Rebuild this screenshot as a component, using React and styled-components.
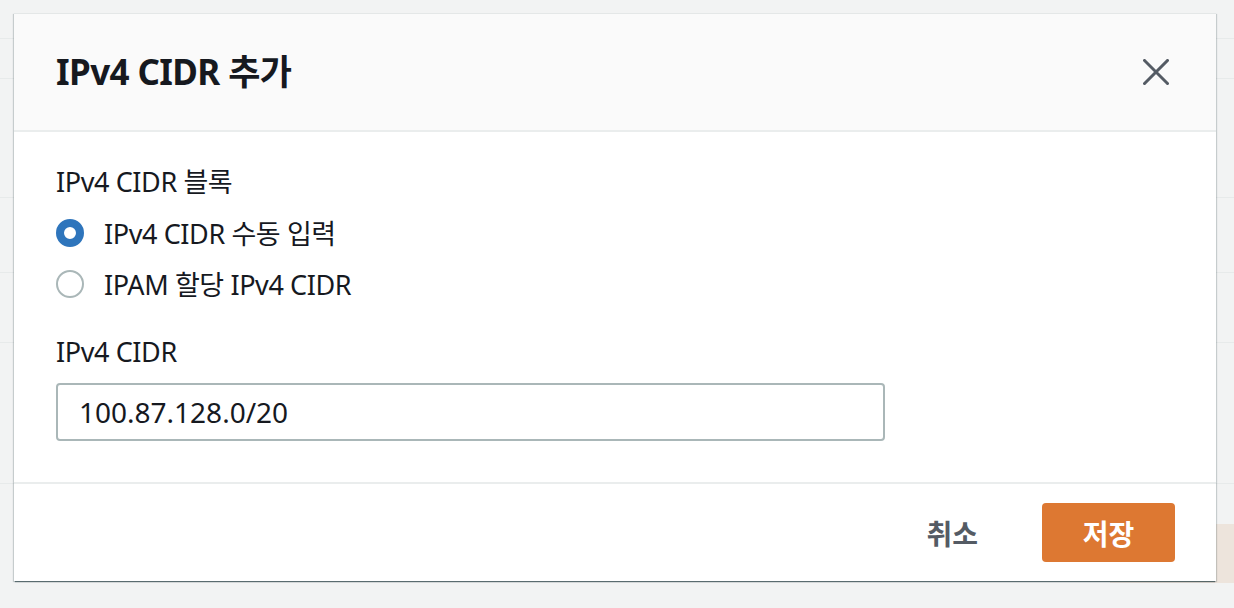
import React from "react";
import styled, { createGlobalStyle } from "styled-components";

const Global = createGlobalStyle`
  html, body { margin: 0; padding: 0; }
  body {
    background: #f2f3f3;
    font-family: "Noto Sans", "Noto Sans CJK KR", sans-serif;
    color: #16191f;
    overflow: hidden;
  }
`;

const Page = styled.div`
  position: relative;
  width: 1234px;
  height: 608px;
  background: #f2f3f3;
  overflow: hidden;
`;

const BgRow = styled.div`
  height: ${(p) => p.$h}px;
  border-bottom: 1px solid #e7eaea;
`;

const BgAction = styled.div`
  display: flex;
  justify-content: flex-end;
  padding-top: 40px;
`;

const BgButton = styled.div`
  width: 124px;
  height: 59px;
  background: #ede4dc;
`;

const Modal = styled.div`
  position: absolute;
  left: 14px;
  top: 13px;
  width: 1202px;
  background: #ffffff;
  display: flex;
  flex-direction: column;
  border-top: 1px solid #e4e7e7;
  box-shadow: 0 2px 1px -1px rgba(0, 28, 36, 0.45), 1px 1px 1px 0 rgba(0, 28, 36, 0.18),
    -1px 1px 1px 0 rgba(0, 28, 36, 0.18);
`;

const Header = styled.div`
  height: 116px;
  display: flex;
  align-items: center;
  justify-content: space-between;
  padding: 0 47px 0 42px;
  background: #fafafa;
  border-bottom: 2px solid #eaeded;
`;

const Title = styled.h2`
  margin: 0;
  font-size: 35px;
  letter-spacing: -0.6px;
  font-weight: 700;
  line-height: 48px;
  color: #16191f;
`;

const CloseButton = styled.button`
  border: 0;
  background: transparent;
  padding: 0;
  width: 26px;
  height: 26px;
  display: flex;
  align-items: center;
  justify-content: center;
  color: #545b64;
  cursor: pointer;
`;

const Body = styled.div`
  padding: 30px 42px 41px 42px;
  border-bottom: 2px solid #eaeded;
  display: flex;
  flex-direction: column;
`;

const Field = styled.div`
  display: flex;
  flex-direction: column;
  margin-top: ${(p) => p.$mt || 0}px;
`;

const Label = styled.div`
  font-size: 27px;
  letter-spacing: -0.4px;
  line-height: 40px;
  margin-bottom: ${(p) => p.$mb}px;
  color: #16191f;
`;

const RadioRow = styled.label`
  height: 51px;
  display: flex;
  align-items: center;
  gap: 20px;
  font-size: 27px;
  letter-spacing: -0.4px;
  color: #16191f;
  cursor: pointer;
`;

const RadioDot = styled.span`
  box-sizing: border-box;
  width: 28px;
  height: 28px;
  border-radius: 50%;
  flex: none;
  background: #ffffff;
  border: ${(p) => (p.$checked ? "8px solid #2e75bc" : "2px solid #aab7b8")};
`;

const Input = styled.div`
  box-sizing: border-box;
  width: 829px;
  height: 58px;
  border: 2px solid #aab7b8;
  border-radius: 4px;
  padding: 0 21px;
  display: flex;
  align-items: center;
  font-size: 28px;
  color: #16191f;
`;

const Footer = styled.div`
  height: 97px;
  display: flex;
  align-items: center;
  justify-content: flex-end;
  padding: 0 41px 0 0;
  gap: 44px;
`;

const TextButton = styled.button`
  border: 0;
  background: transparent;
  font-family: inherit;
  font-size: 28px;
  font-weight: 700;
  color: #545b64;
  padding: 0 20px;
  height: 59px;
`;

const PrimaryButton = styled.button`
  border: 0;
  border-radius: 4px;
  background: #dd7832;
  color: #ffffff;
  font-family: inherit;
  font-size: 28px;
  font-weight: 700;
  width: 133px;
  height: 59px;
`;

export default function App() {
  return (
    <>
      <Global />
      <Page>
        <BgRow $h={38} />
        <BgRow $h={39} />
        <BgRow $h={118} />
        <BgRow $h={74} />
        <BgRow $h={69} />
        <BgRow $h={140} />
        <BgAction>
          <BgButton />
        </BgAction>
        <Modal>
          <Header>
            <Title>IPv4 CIDR 추가</Title>
            <CloseButton aria-label="닫기">
              <svg width="26" height="26" viewBox="0 0 26 26" fill="none">
                <path d="M1.5 1.5 L24.5 24.5 M24.5 1.5 L1.5 24.5" stroke="currentColor" strokeWidth="3" strokeLinecap="square" />
              </svg>
            </CloseButton>
          </Header>
          <Body>
            <Field>
              <Label $mb={5}>IPv4 CIDR 블록</Label>
              <RadioRow>
                <RadioDot $checked />
                IPv4 CIDR 수동 입력
              </RadioRow>
              <RadioRow>
                <RadioDot />
                IPAM 할당 IPv4 CIDR
              </RadioRow>
            </Field>
            <Field $mt={23}>
              <Label $mb={11}>IPv4 CIDR</Label>
              <Input>100.87.128.0/20</Input>
            </Field>
          </Body>
          <Footer>
            <TextButton>취소</TextButton>
            <PrimaryButton>저장</PrimaryButton>
          </Footer>
        </Modal>
      </Page>
    </>
  );
}
